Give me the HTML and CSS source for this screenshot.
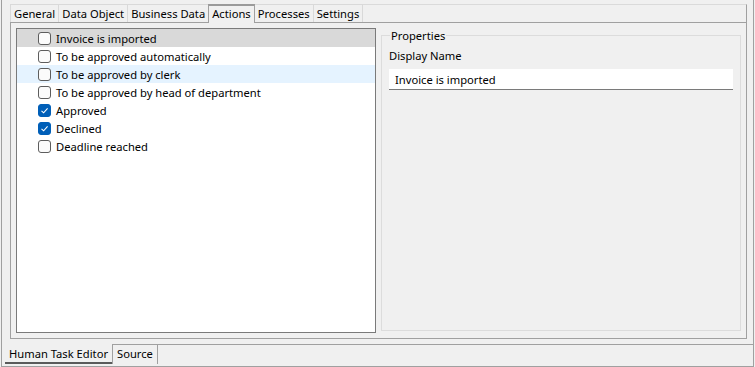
FILE: index.html
```html
<!DOCTYPE html>
<html lang="en">
<head>
    <meta charset="UTF-8">
    <title>Human Task Editor</title>
    <link rel="stylesheet" href="styles.css">
</head>
<body>
    <div class="window">
        <div class="folder">
            <div class="tabs">
                <span class="tab">General</span>
                <span class="tab">Data Object</span>
                <span class="tab">Business Data</span>
                <span class="tab active">Actions</span>
                <span class="tab">Processes</span>
                <span class="tab">Settings</span>
            </div>
            <div class="folder-body">
                <div class="list">
                    <div class="row selected"><span class="check"></span>Invoice is imported</div>
                    <div class="row"><span class="check"></span>To be approved automatically</div>
                    <div class="row hover"><span class="check"></span>To be approved by clerk</div>
                    <div class="row"><span class="check"></span>To be approved by head of department</div>
                    <div class="row"><span class="check checked"><svg width="9" height="9" viewBox="0 0 9 9"><path d="M1.5 4.8 L3.6 6.8 L7.6 2.3" fill="none" stroke="#fff" stroke-width="1.1"/></svg></span>Approved</div>
                    <div class="row"><span class="check checked"><svg width="9" height="9" viewBox="0 0 9 9"><path d="M1.5 4.8 L3.6 6.8 L7.6 2.3" fill="none" stroke="#fff" stroke-width="1.1"/></svg></span>Declined</div>
                    <div class="row"><span class="check"></span>Deadline reached</div>
                </div>
                <fieldset class="props">
                    <legend>Properties</legend>
                    <label class="field-label" for="displayName">Display Name</label>
                    <input id="displayName" class="field" type="text" value="Invoice is imported">
                </fieldset>
            </div>
        </div>
        <div class="editor-tabs">
            <span class="etab active">Human Task Editor</span>
            <span class="etab">Source</span>
            <span class="etab-fill"></span>
        </div>
    </div>
</body>
</html>
```

FILE: styles.css
```css
* {
    box-sizing: border-box;
}
body {
    margin: 0;
    background: #f0f0f0;
    font-family: "Noto Sans", "Liberation Sans", sans-serif;
    font-size: 11.2px;
    color: #000;
}
.window {
    margin-left: 1px;
    width: 753px;
    height: 367px;
    border-left: 1px solid #a0a0a0;
    border-right: 1px solid #a0a0a0;
    border-bottom: 1px solid #a0a0a0;
    padding: 4px 6px 0 8px;
}
.folder {
    width: 737px;
}
.tabs {
    display: flex;
    height: 18px;
    border-top: 1px solid #dadada;
    border-right: 1px solid #a0a0a0;
}
.tab {
    height: 18px;
    margin-top: -1px;
    padding: 0 3px;
    line-height: 17px;
    border: 1px solid #d9d9d9;
    border-bottom: none;
    border-right: none;
}
.tab:last-child {
    border-right: 1px solid #d9d9d9;
}
.tab.active {
    border-top: 2px solid #9a9a9a;
    border-left-color: #a0a0a0;
    border-right: 1px solid #a0a0a0;
    height: 19px;
    margin-bottom: -1px;
    line-height: 16px;
    position: relative;
    z-index: 1;
    background: #f0f0f0;
}
.tab.active + .tab {
    border-left: none;
}
.folder-body {
    display: flex;
    gap: 5px;
    height: 317px;
    padding: 5px;
    border: 1px solid #a0a0a0;
}
.list {
    width: 360px;
    height: 305px;
    background: #fff;
    border: 1px solid #7a7a7a;
}
.row {
    display: flex;
    align-items: center;
    height: 18px;
    padding-left: 21px;
    white-space: nowrap;
}
.row.selected {
    background: #d9d9d9;
}
.row.hover {
    background: #e5f3ff;
}
.check {
    display: flex;
    align-items: center;
    justify-content: center;
    width: 13px;
    height: 13px;
    margin-right: 5px;
    border: 1px solid #5d5d5d;
    border-radius: 3px;
    background: #fbfbfb;
}
.check.checked {
    background: #005fb8;
    border-color: #005fb8;
}
.props {
    width: 360px;
    height: 303px;
    margin: 0;
    padding: 0 7px;
    border: 1px solid #dcdcdc;
}
.props legend {
    padding: 0 1px;
    margin-left: 1px;
}
.field-label {
    display: block;
    margin-top: 4px;
    height: 17px;
    line-height: 17px;
}
.field {
    display: block;
    width: 344px;
    height: 21px;
    margin-top: 5px;
    padding: 0 6px;
    border: none;
    border-bottom: 1px solid #7a7a7a;
    background: #fff;
    font: inherit;
    color: #000;
    outline: none;
}
.editor-tabs {
    display: flex;
    height: 22px;
    margin: 5px -6px 0 -5px;
}
.etab {
    height: 22px;
    padding: 0 4px;
    line-height: 18px;
    border-top: 1px solid #a0a0a0;
}
.etab.active {
    height: 20px;
    padding: 0 4px;
    border-top: none;
    border-bottom: 2px solid #5a5a5a;
    line-height: 19px;
}
.etab + .etab {
    border-left: 1px solid #a0a0a0;
    border-right: 1px solid #a0a0a0;
    height: 20px;
    border-top: 1px solid #a0a0a0;
}
.etab-fill {
    flex: 1;
    border-top: 1px solid #a0a0a0;
}
```
